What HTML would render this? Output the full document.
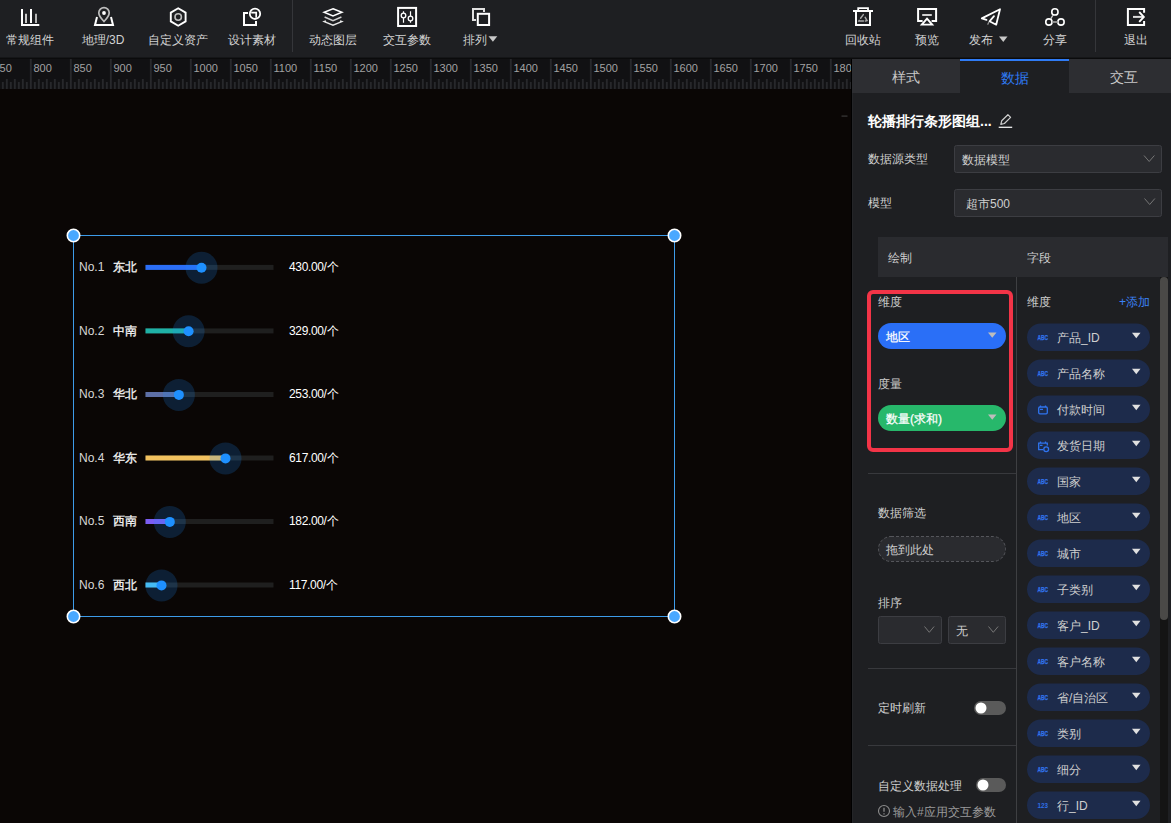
<!DOCTYPE html>
<html><head><meta charset="utf-8">
<style>
*{box-sizing:border-box;margin:0;padding:0}
html,body{width:1171px;height:823px;overflow:hidden;background:#0a0605;font-family:"Liberation Sans",sans-serif;}
.abs{position:absolute}
#top{position:absolute;left:0;top:0;width:1171px;height:57.5px;background:#1e1f22}
#topline{position:absolute;left:0;top:57px;width:1171px;height:2px;background:linear-gradient(#151618 0,#151618 1px,#0b0b0c 1px)}
.tl{position:absolute;top:32px;font-size:12px;line-height:16px;color:#d2d2d2;white-space:nowrap;text-align:center}
.ico{position:absolute;top:7px;width:20px;height:20px;overflow:visible}
.sep{position:absolute;top:0;width:1px;height:52px;background:#35363a}
#ruler{position:absolute;left:0;top:59px;width:852px;height:30px;background:#111113}
#canvas{position:absolute;left:0;top:89px;width:852px;height:734px;background:#0a0605}
#panel{position:absolute;left:852px;top:59px;width:319px;height:764px;background:#1e1f22;box-shadow:inset 1px 0 0 #242528}
.tab{position:absolute;top:0;height:34px;font-size:14px;line-height:35px;text-align:center;color:#c8c8c8;background:#2d2e32}
.lbl{position:absolute;font-size:12px;line-height:16px;color:#cfcfcf;white-space:nowrap}
.sel{position:absolute;background:#2a2b2f;border:1px solid #3a3b40;border-radius:2px}
.row{position:absolute;left:79px;height:20px;font-size:12px;color:#fff;white-space:nowrap}
</style></head><body>

<div id="top">
  <!-- left items -->
  <svg class="abs" style="left:0;top:0" width="1171" height="58" viewBox="0 0 1171 58" fill="none" stroke="#fff" stroke-width="2">
  <!-- chart -->
  <path d="M22,9 V25 H39.3"/>
  <path d="M26,13.8 V23" stroke="#c8c8c8"/>
  <path d="M31,9 V23"/>
  <path d="M36,13.8 V23" stroke="#b4b4b4"/>
  <!-- map pin -->
  <path d="M97,17 L95,25 H113 L111,17" />
  <path d="M104,21.5 C100,17.5 98.8,15.5 98.8,12.8 A5.2,5.2 0 0 1 109.2,12.8 C109.2,15.5 108,17.5 104,21.5 Z" stroke="#bdbdbd" stroke-width="1.7"/>
  <circle cx="104" cy="13" r="1.9" fill="#fff" stroke="none"/>
  <!-- hexagon -->
  <path d="M178.2,8.3 L185.6,12.6 V21.4 L178.2,25.7 L170.8,21.4 V12.6 Z" stroke-width="1.9"/>
  <circle cx="178.2" cy="17" r="3.2" stroke="#bdbdbd" stroke-width="1.6"/>
  <!-- design -->
  <path d="M248,12.9 H244 V25 H256 V21"/>
  <circle cx="255" cy="13.8" r="5.2" stroke-width="1.8"/>
  <path d="M251.2,12.6 H256.2 V17.8" stroke-width="1.7"/>
  <!-- separator -->
  <!-- layers -->
  <path d="M333,8.7 L341.9,12.3 L333,15.9 L324.1,12.3 Z" stroke-width="1.5"/>
  <path d="M324.6,17 L333,20.6 L341.4,17" stroke-width="1.5" stroke="#d0d0d0"/>
  <path d="M326,20.9 L324.2,21.6 L333,25.2 L341.8,21.6 L340,20.9" stroke-width="1.5" stroke="#e8e8e8"/>
  <!-- sliders -->
  <rect x="398.1" y="7.9" width="18" height="18.1"/>
  <path d="M403.5,11.2 V13.2 M403.5,17.8 V22.8 M410.5,11.2 V16.2 M410.5,20.8 V22.8" stroke-width="1.2"/>
  <circle cx="403.5" cy="15.5" r="2.3" stroke-width="1.3"/>
  <circle cx="410.5" cy="18.5" r="2.3" stroke-width="1.3"/>
  <!-- arrange -->
  <path d="M476,19.9 H473 V8.9 H484 V12" stroke="#e0e0e0"/>
  <rect x="477.8" y="13.8" width="11.3" height="11.2"/>
  <path d="M488.5,36.3 h8.8 l-4.4,5.5 z" fill="#c8c8c8" stroke="none"/>
  <path d="M999,36.6 h8.5 l-4.25,5.5 z" fill="#c8c8c8" stroke="none"/>
  <!-- trash -->
  <path d="M853,11 H873"/>
  <path d="M858.2,11 V8.1 H868 V11" stroke-width="1.8"/>
  <path d="M856,12 V25 H870 V12"/>
  <path d="M863.3,14.6 L860.6,18.2 M865.2,17.4 L867,20.6 L865.5,21 M859.2,20.4 L858.9,21 H863.5" stroke="#a8a8a8" stroke-width="1.5" stroke-linecap="round"/>
  <!-- preview -->
  <path d="M922.6,21 H918.1 V8.9 H936.1 V21 H931.6"/>
  <path d="M922.2,15 H931.8" stroke="#d0d0d0"/>
  <path d="M927,18.6 L932.2,24.6 H921.8 Z" stroke-width="1.9"/>
  <!-- send -->
  <path d="M986.5,19.9 L981.8,18.4 L1000,9.2 L996.2,24.7 L989.5,21.3 L994,16.2" stroke-width="1.8" stroke-linejoin="round" stroke-linecap="round"/>
  <path d="M989,22 L987.6,24.6" stroke="#999" stroke-width="1.2"/>
  <!-- share -->
  <circle cx="1054.9" cy="11.9" r="3.15" stroke-width="1.6"/>
  <circle cx="1048.9" cy="22" r="3.15" stroke-width="1.6"/>
  <circle cx="1061" cy="22" r="3.15" stroke-width="1.6"/>
  <path d="M1052.8,15.4 L1050.8,18.8" stroke="#ccc" stroke-width="1.3"/>
  <path d="M1052.2,22 H1057.8" stroke="#999" stroke-width="1.8"/>
  <!-- exit -->
  <path d="M1144.1,12.8 V8.9 H1127.9 V25 H1144.1 V20.9"/>
  <path d="M1133,16.9 H1143.2" stroke="#ddd"/>
  <path d="M1139.2,12 L1143.8,16.9 L1139.2,21.9" stroke-width="1.9"/>
</svg>

  <div class="tl" style="left:0;width:60px">常规组件</div>
  <div class="tl" style="left:73px;width:60px">地理/3D</div>
  <div class="tl" style="left:148px;width:60px">自定义资产</div>
  <div class="tl" style="left:222px;width:60px">设计素材</div>
  <div class="sep" style="left:292px"></div>
  <div class="tl" style="left:303px;width:60px">动态图层</div>
  <div class="tl" style="left:377px;width:60px">交互参数</div>
  <div class="tl" style="left:463px;text-align:left">排列</div>

  <div class="tl" style="left:833px;width:60px">回收站</div>
  <div class="tl" style="left:897px;width:60px">预览</div>
  <div class="tl" style="left:969px;text-align:left">发布</div>
  <div class="tl" style="left:1025px;width:60px">分享</div>
  <div class="sep" style="left:1095px"></div>
  <div class="tl" style="left:1106px;width:60px">退出</div>
</div>

<div id="topline"></div>
<div id="ruler"><svg width="852" height="31" viewBox="0 0 852 31" style="position:absolute;left:0;top:-1px;overflow:hidden">
<defs><pattern id="tk" x="29.9" y="0" width="40" height="31" patternUnits="userSpaceOnUse">
<rect x="0" y="1" width="1.8" height="30" fill="#28292c"/>
<rect x="4" y="24" width="1.8" height="7" fill="#27282b"/><rect x="8" y="21" width="1.8" height="10" fill="#27282b"/><rect x="12" y="24" width="1.8" height="7" fill="#27282b"/><rect x="16" y="21" width="1.8" height="10" fill="#27282b"/><rect x="20" y="24" width="1.8" height="7" fill="#27282b"/><rect x="24" y="21" width="1.8" height="10" fill="#27282b"/><rect x="28" y="24" width="1.8" height="7" fill="#27282b"/><rect x="32" y="21" width="1.8" height="10" fill="#27282b"/><rect x="36" y="24" width="1.8" height="7" fill="#27282b"/>
</pattern></defs>
<rect width="852" height="31" fill="url(#tk)"/>
<g font-family="Liberation Sans" font-size="11" fill="#a2a2a2"><text x="-6.5" y="14">750</text><text x="33.5" y="14">800</text><text x="73.5" y="14">850</text><text x="113.5" y="14">900</text><text x="153.5" y="14">950</text><text x="193.5" y="14">1000</text><text x="233.5" y="14">1050</text><text x="273.5" y="14">1100</text><text x="313.5" y="14">1150</text><text x="353.5" y="14">1200</text><text x="393.5" y="14">1250</text><text x="433.5" y="14">1300</text><text x="473.5" y="14">1350</text><text x="513.5" y="14">1400</text><text x="553.5" y="14">1450</text><text x="593.5" y="14">1500</text><text x="633.5" y="14">1550</text><text x="673.5" y="14">1600</text><text x="713.5" y="14">1650</text><text x="753.5" y="14">1700</text><text x="793.5" y="14">1750</text><text x="833.5" y="14">1800</text><text x="873.5" y="14">1850</text></g>
</svg></div>
<div id="canvas"><svg width="852" height="734" viewBox="0 89 852 734" style="position:absolute;left:0;top:0" font-family="Liberation Sans">
<rect x="841.5" y="115.5" width="6" height="1.2" fill="#3a3a3a"/>
<rect x="73.5" y="235.5" width="601" height="381" fill="none" stroke="#3d9be9" stroke-width="1"/>
<rect x="145.5" y="264.9" width="128" height="5" fill="#1f1f1f"/>
<rect x="145.5" y="264.9" width="55.5" height="5" fill="#2b6ef7"/>
<circle cx="201.5" cy="267.8" r="16" fill="#1890ff" fill-opacity="0.19"/>
<circle cx="201.5" cy="267.8" r="5" fill="#1e90ff"/>
<text x="79" y="271.0" font-size="12" fill="#d8d8d8">No.1</text>
<text x="113" y="271.0" font-size="11.5" fill="#f6f6f6" stroke="#f6f6f6" stroke-width="0.3">东北</text>
<text x="289" y="271.0" font-size="12" fill="#fff" letter-spacing="-0.35">430.00/个</text>
<rect x="145.5" y="328.4" width="128" height="5" fill="#1f1f1f"/>
<rect x="145.5" y="328.4" width="42.6" height="5" fill="#1fb1a6"/>
<circle cx="188.6" cy="331.3" r="16" fill="#1890ff" fill-opacity="0.19"/>
<circle cx="188.6" cy="331.3" r="5" fill="#1e90ff"/>
<text x="79" y="334.5" font-size="12" fill="#d8d8d8">No.2</text>
<text x="113" y="334.5" font-size="11.5" fill="#f6f6f6" stroke="#f6f6f6" stroke-width="0.3">中南</text>
<text x="289" y="334.5" font-size="12" fill="#fff" letter-spacing="-0.35">329.00/个</text>
<rect x="145.5" y="392.0" width="128" height="5" fill="#1f1f1f"/>
<rect x="145.5" y="392.0" width="32.9" height="5" fill="#5d6fa6"/>
<circle cx="178.9" cy="394.9" r="16" fill="#1890ff" fill-opacity="0.19"/>
<circle cx="178.9" cy="394.9" r="5" fill="#1e90ff"/>
<text x="79" y="398.1" font-size="12" fill="#d8d8d8">No.3</text>
<text x="113" y="398.1" font-size="11.5" fill="#f6f6f6" stroke="#f6f6f6" stroke-width="0.3">华北</text>
<text x="289" y="398.1" font-size="12" fill="#fff" letter-spacing="-0.35">253.00/个</text>
<rect x="145.5" y="455.5" width="128" height="5" fill="#1f1f1f"/>
<rect x="145.5" y="455.5" width="79.5" height="5" fill="#f2c15f"/>
<circle cx="225.5" cy="458.4" r="16" fill="#1890ff" fill-opacity="0.19"/>
<circle cx="225.5" cy="458.4" r="5" fill="#1e90ff"/>
<text x="79" y="461.6" font-size="12" fill="#d8d8d8">No.4</text>
<text x="113" y="461.6" font-size="11.5" fill="#f6f6f6" stroke="#f6f6f6" stroke-width="0.3">华东</text>
<text x="289" y="461.6" font-size="12" fill="#fff" letter-spacing="-0.35">617.00/个</text>
<rect x="145.5" y="519.0" width="128" height="5" fill="#1f1f1f"/>
<rect x="145.5" y="519.0" width="23.8" height="5" fill="#7b5df2"/>
<circle cx="169.8" cy="521.9" r="16" fill="#1890ff" fill-opacity="0.19"/>
<circle cx="169.8" cy="521.9" r="5" fill="#1e90ff"/>
<text x="79" y="525.1" font-size="12" fill="#d8d8d8">No.5</text>
<text x="113" y="525.1" font-size="11.5" fill="#f6f6f6" stroke="#f6f6f6" stroke-width="0.3">西南</text>
<text x="289" y="525.1" font-size="12" fill="#fff" letter-spacing="-0.35">182.00/个</text>
<rect x="145.5" y="582.5" width="128" height="5" fill="#1f1f1f"/>
<rect x="145.5" y="582.5" width="15.5" height="5" fill="#4fc5f2"/>
<circle cx="161.5" cy="585.4" r="16" fill="#1890ff" fill-opacity="0.19"/>
<circle cx="161.5" cy="585.4" r="5" fill="#1e90ff"/>
<text x="79" y="588.6" font-size="12" fill="#d8d8d8">No.6</text>
<text x="113" y="588.6" font-size="11.5" fill="#f6f6f6" stroke="#f6f6f6" stroke-width="0.3">西北</text>
<text x="289" y="588.6" font-size="12" fill="#fff" letter-spacing="-0.35">117.00/个</text>
<g fill="#4aa8ff" stroke="#fff" stroke-width="1.6">
<circle cx="73.5" cy="235.5" r="6.2"/><circle cx="674.5" cy="235.5" r="6.2"/>
<circle cx="73.5" cy="616.5" r="6.2"/><circle cx="674.5" cy="616.5" r="6.2"/>
</g>
</svg></div>

<div class="abs" style="left:851px;top:59px;width:1px;height:764px;background:#000"></div>
<div id="panel">
  <div class="tab" style="left:0;width:108px;line-height:37px">样式</div>
  <div class="tab" style="left:108px;width:109px;background:#1e1f22;color:#2f7bf5;border-top:2px solid #2f7bf5;line-height:34px">数据</div>
  <div class="tab" style="left:217px;width:102px;line-height:37px;text-indent:8px">交互</div>
  <svg width="319" height="730" viewBox="852 93 319 730" style="position:absolute;left:0;top:34px" font-family="Liberation Sans">
    <text x="868" y="126" font-size="14" font-weight="bold" fill="#fff">轮播排行条形图组...</text>
    <g fill="none" stroke-width="1.2"><path d="M1000.8,124.4 L1001.7,120.8 L1007.9,114.7 L1010.6,117.4 L1004.4,123.5 Z" stroke="#cfcfcf" stroke-linejoin="round"/><path d="M998.7,127.3 H1012.2" stroke="#f0f0f0" stroke-width="1.3"/></g>
    <text x="868" y="163" font-size="12" fill="#cfcfcf">数据源类型</text>
    <rect x="954.5" y="145.5" width="207" height="27" rx="2" fill="#2a2b2f" stroke="#3c3d42"/>
    <text x="962" y="163.5" font-size="12" fill="#cfcfcf">数据模型</text>
    <path d="M1144,155.5 L1149.2,161.5 L1154.4,155.5" fill="none" stroke="#767676" stroke-width="1"/>
    <text x="868" y="207" font-size="12" fill="#cfcfcf">模型</text>
    <rect x="954.5" y="189.5" width="207" height="27" rx="2" fill="#2a2b2f" stroke="#3c3d42"/>
    <text x="966" y="207.5" font-size="12" fill="#cfcfcf">超市500</text>
    <path d="M1144.5,198.5 L1149.7,204.5 L1154.9,198.5" fill="none" stroke="#767676" stroke-width="1"/>

    <rect x="878" y="237" width="290" height="40" fill="#2a2b2f"/>
    <text x="888" y="262" font-size="12" fill="#cfcfcf">绘制</text>
    <text x="1026.5" y="262" font-size="12" fill="#cfcfcf">字段</text>
    <rect x="1016" y="277" width="1" height="546" fill="#3e3f42"/>

    <rect x="869" y="292" width="142" height="158" rx="4" fill="none" stroke="#f33447" stroke-width="4"/>
    <text x="878" y="306" font-size="12" fill="#cfcfcf">维度</text>
    <rect x="878" y="323" width="128" height="26" rx="13" fill="#2a6ff7"/>
    <text x="886" y="340.5" font-size="12" fill="#fff" stroke="#fff" stroke-width="0.25">地区</text>
    <path d="M988,332.5 h8.5 l-4.25,5.3 z" fill="#bdbdbd"/>
    <text x="878" y="388" font-size="12" fill="#cfcfcf">度量</text>
    <rect x="878" y="405" width="128" height="26" rx="13" fill="#27b86b"/>
    <text x="886" y="422.5" font-size="12" fill="#fff" stroke="#fff" stroke-width="0.25">数量(求和)</text>
    <path d="M988,414.5 h8.5 l-4.25,5.3 z" fill="#bdbdbd"/>

    <rect x="868" y="473" width="148" height="1" fill="#38393d"/>
    <text x="878" y="517" font-size="12" fill="#cfcfcf">数据筛选</text>
    <rect x="878.5" y="536.5" width="127" height="25" rx="12.5" fill="#2a2b2f" stroke="#55565b" stroke-dasharray="3 2"/>
    <text x="886" y="554" font-size="12" fill="#cfcfcf">拖到此处</text>
    <text x="878" y="607" font-size="12" fill="#cfcfcf">排序</text>
    <rect x="878.5" y="616.5" width="63" height="27" rx="2" fill="#2a2b2f" stroke="#3c3d42"/>
    <path d="M924.5,626.5 L929.3,632.3 L934.1,626.5" fill="none" stroke="#767676" stroke-width="1"/>
    <rect x="948.5" y="616.5" width="57" height="27" rx="2" fill="#2a2b2f" stroke="#3c3d42"/>
    <text x="956" y="635" font-size="12" fill="#cfcfcf">无</text>
    <path d="M988.5,626.5 L993.3,632.3 L998.1,626.5" fill="none" stroke="#767676" stroke-width="1"/>

    <rect x="868" y="668" width="148" height="1" fill="#38393d"/>
    <text x="878" y="712" font-size="12" fill="#cfcfcf">定时刷新</text>
    <rect x="974" y="701" width="32" height="14" rx="7" fill="#5a5a5a"/>
    <circle cx="981" cy="708" r="5.5" fill="#fff"/>
    <rect x="868" y="745" width="148" height="1" fill="#38393d"/>
    <text x="878" y="790" font-size="12" fill="#cfcfcf">自定义数据处理</text>
    <rect x="976" y="778" width="30" height="14" rx="7" fill="#5a5a5a"/>
    <circle cx="983" cy="785" r="5.5" fill="#fff"/>
    <circle cx="884" cy="811" r="5.5" fill="none" stroke="#8c8c8c" stroke-width="1.1"/>
    <path d="M884,807.8 v4 M884,813.3 v1.2" stroke="#8c8c8c" stroke-width="1.3"/>
    <text x="893" y="815.5" font-size="12" fill="#9a9a9a">输入#应用交互参数</text>

    <text x="1027" y="306" font-size="12" fill="#cfcfcf">维度</text>
    <text x="1119" y="306" font-size="12" fill="#3b82f6">+添加</text>
<rect x="1027" y="323.5" width="123" height="27.5" rx="13.75" fill="#1d2b4b"/>
<text x="1037.5" y="340.2" font-size="7" font-weight="bold" fill="#3274ec" stroke="#3274ec" stroke-width="0.25" textLength="10.5" lengthAdjust="spacingAndGlyphs">ABC</text>
<text x="1057" y="341.6" font-size="12" fill="#cfcfcf">产品_ID</text>
<path d="M1132,332.8 h8.5 l-4.25,5.5 z" fill="#e0e0e0"/>
<rect x="1027" y="359.5" width="123" height="27.5" rx="13.75" fill="#1d2b4b"/>
<text x="1037.5" y="376.2" font-size="7" font-weight="bold" fill="#3274ec" stroke="#3274ec" stroke-width="0.25" textLength="10.5" lengthAdjust="spacingAndGlyphs">ABC</text>
<text x="1057" y="377.6" font-size="12" fill="#cfcfcf">产品名称</text>
<path d="M1132,368.8 h8.5 l-4.25,5.5 z" fill="#e0e0e0"/>
<rect x="1027" y="395.5" width="123" height="27.5" rx="13.75" fill="#1d2b4b"/>
<g fill="none" stroke="#2f74f0" stroke-width="1.3"><rect x="1038.7" y="407.0" width="8.6" height="6.8" rx="1.2"/><path d="M1040.5,405.4 v1.5 M1045.5,405.4 v1.5 M1040,409.4 h3"/></g>
<text x="1057" y="413.6" font-size="12" fill="#cfcfcf">付款时间</text>
<path d="M1132,404.8 h8.5 l-4.25,5.5 z" fill="#e0e0e0"/>
<rect x="1027" y="431.5" width="123" height="27.5" rx="13.75" fill="#1d2b4b"/>
<g fill="none" stroke="#2f74f0" stroke-width="1.3"><path d="M1043,449.7 h-4.3 v-6.6 h8.6 v2.4 M1040.5,441.4 v1.5 M1045.5,441.4 v1.5 M1040,445.4 h2.5"/><circle cx="1046.2" cy="449.3" r="2.4"/></g>
<text x="1057" y="449.6" font-size="12" fill="#cfcfcf">发货日期</text>
<path d="M1132,440.8 h8.5 l-4.25,5.5 z" fill="#e0e0e0"/>
<rect x="1027" y="467.5" width="123" height="27.5" rx="13.75" fill="#1d2b4b"/>
<text x="1037.5" y="484.2" font-size="7" font-weight="bold" fill="#3274ec" stroke="#3274ec" stroke-width="0.25" textLength="10.5" lengthAdjust="spacingAndGlyphs">ABC</text>
<text x="1057" y="485.6" font-size="12" fill="#cfcfcf">国家</text>
<path d="M1132,476.8 h8.5 l-4.25,5.5 z" fill="#e0e0e0"/>
<rect x="1027" y="503.5" width="123" height="27.5" rx="13.75" fill="#1d2b4b"/>
<text x="1037.5" y="520.2" font-size="7" font-weight="bold" fill="#3274ec" stroke="#3274ec" stroke-width="0.25" textLength="10.5" lengthAdjust="spacingAndGlyphs">ABC</text>
<text x="1057" y="521.5" font-size="12" fill="#cfcfcf">地区</text>
<path d="M1132,512.8 h8.5 l-4.25,5.5 z" fill="#e0e0e0"/>
<rect x="1027" y="539.5" width="123" height="27.5" rx="13.75" fill="#1d2b4b"/>
<text x="1037.5" y="556.2" font-size="7" font-weight="bold" fill="#3274ec" stroke="#3274ec" stroke-width="0.25" textLength="10.5" lengthAdjust="spacingAndGlyphs">ABC</text>
<text x="1057" y="557.5" font-size="12" fill="#cfcfcf">城市</text>
<path d="M1132,548.8 h8.5 l-4.25,5.5 z" fill="#e0e0e0"/>
<rect x="1027" y="575.5" width="123" height="27.5" rx="13.75" fill="#1d2b4b"/>
<text x="1037.5" y="592.2" font-size="7" font-weight="bold" fill="#3274ec" stroke="#3274ec" stroke-width="0.25" textLength="10.5" lengthAdjust="spacingAndGlyphs">ABC</text>
<text x="1057" y="593.5" font-size="12" fill="#cfcfcf">子类别</text>
<path d="M1132,584.8 h8.5 l-4.25,5.5 z" fill="#e0e0e0"/>
<rect x="1027" y="611.5" width="123" height="27.5" rx="13.75" fill="#1d2b4b"/>
<text x="1037.5" y="628.2" font-size="7" font-weight="bold" fill="#3274ec" stroke="#3274ec" stroke-width="0.25" textLength="10.5" lengthAdjust="spacingAndGlyphs">ABC</text>
<text x="1057" y="629.5" font-size="12" fill="#cfcfcf">客户_ID</text>
<path d="M1132,620.8 h8.5 l-4.25,5.5 z" fill="#e0e0e0"/>
<rect x="1027" y="647.5" width="123" height="27.5" rx="13.75" fill="#1d2b4b"/>
<text x="1037.5" y="664.2" font-size="7" font-weight="bold" fill="#3274ec" stroke="#3274ec" stroke-width="0.25" textLength="10.5" lengthAdjust="spacingAndGlyphs">ABC</text>
<text x="1057" y="665.5" font-size="12" fill="#cfcfcf">客户名称</text>
<path d="M1132,656.8 h8.5 l-4.25,5.5 z" fill="#e0e0e0"/>
<rect x="1027" y="683.5" width="123" height="27.5" rx="13.75" fill="#1d2b4b"/>
<text x="1037.5" y="700.2" font-size="7" font-weight="bold" fill="#3274ec" stroke="#3274ec" stroke-width="0.25" textLength="10.5" lengthAdjust="spacingAndGlyphs">ABC</text>
<text x="1057" y="701.5" font-size="12" fill="#cfcfcf">省/自治区</text>
<path d="M1132,692.8 h8.5 l-4.25,5.5 z" fill="#e0e0e0"/>
<rect x="1027" y="719.5" width="123" height="27.5" rx="13.75" fill="#1d2b4b"/>
<text x="1037.5" y="736.2" font-size="7" font-weight="bold" fill="#3274ec" stroke="#3274ec" stroke-width="0.25" textLength="10.5" lengthAdjust="spacingAndGlyphs">ABC</text>
<text x="1057" y="737.5" font-size="12" fill="#cfcfcf">类别</text>
<path d="M1132,728.8 h8.5 l-4.25,5.5 z" fill="#e0e0e0"/>
<rect x="1027" y="755.5" width="123" height="27.5" rx="13.75" fill="#1d2b4b"/>
<text x="1037.5" y="772.2" font-size="7" font-weight="bold" fill="#3274ec" stroke="#3274ec" stroke-width="0.25" textLength="10.5" lengthAdjust="spacingAndGlyphs">ABC</text>
<text x="1057" y="773.5" font-size="12" fill="#cfcfcf">细分</text>
<path d="M1132,764.8 h8.5 l-4.25,5.5 z" fill="#e0e0e0"/>
<rect x="1027" y="791.5" width="123" height="27.5" rx="13.75" fill="#1d2b4b"/>
<text x="1037.5" y="808.2" font-size="7" font-weight="bold" fill="#2f6fe8" textLength="10.5" lengthAdjust="spacingAndGlyphs">123</text>
<text x="1057" y="809.5" font-size="12" fill="#cfcfcf">行_ID</text>
<path d="M1132,800.8 h8.5 l-4.25,5.5 z" fill="#e0e0e0"/>
    <rect x="1160" y="277" width="8" height="546" fill="#141414"/>
    <rect x="1160" y="277" width="8" height="343" rx="4" fill="#4a4947"/>
  </svg>
</div>

</body></html>
